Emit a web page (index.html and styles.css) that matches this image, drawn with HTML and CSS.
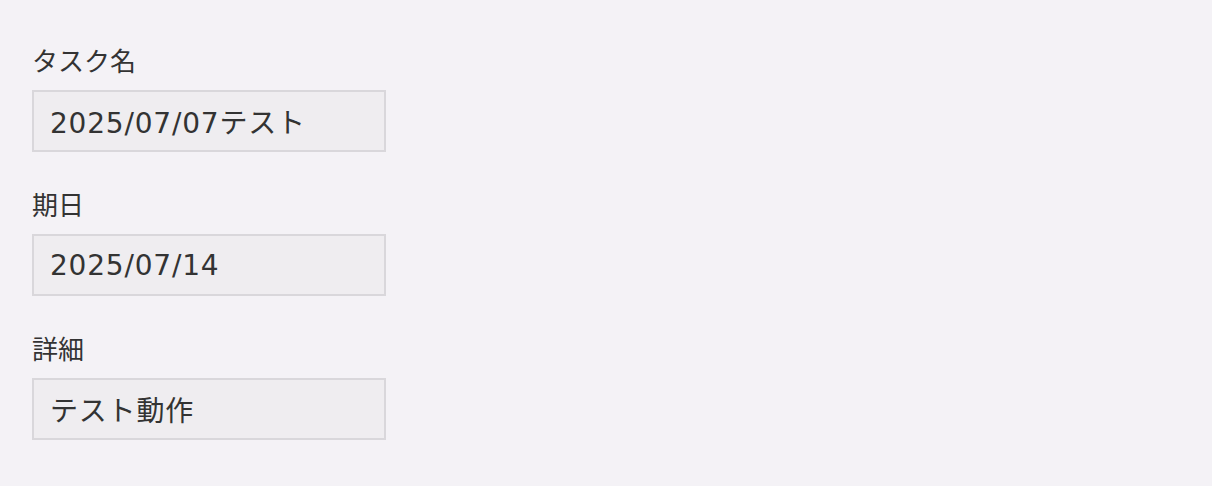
FILE: index.html
```html
<!DOCTYPE html>
<html lang="ja">
<head>
    <meta charset="UTF-8">
    <meta name="viewport" content="width=device-width, initial-scale=1.0">
    <title>タスク詳細</title>
    <link rel="stylesheet" href="styles.css">
</head>
<body>
    <main class="task-detail">
        <div class="form-group">
            <label for="taskName">タスク名</label>
            <input type="text" id="taskName" value="2025/07/07テスト" readonly>
        </div>

        <div class="form-group">
            <label for="dueDate">期日</label>
            <input type="text" id="dueDate" value="2025/07/14" readonly>
        </div>

        <div class="form-group">
            <label for="detail">詳細</label>
            <input type="text" id="detail" value="テスト動作" readonly>
        </div>
    </main>
</body>
</html>
```

FILE: styles.css
```css
body {
    background-color: #f4f2f6;
    margin: 0;
    font-family: "Noto Sans CJK JP", "Noto Sans", sans-serif;
    color: #333;
}

.task-detail {
    display: flex;
    flex-direction: column;
    gap: 33px;
    padding: 41px 32px;
}

.form-group {
    display: flex;
    flex-direction: column;
    align-items: flex-start;
}

.form-group label {
    display: block;
    font-size: 26px;
    line-height: 38px;
    margin-bottom: 11px;
    color: #333;
}

.form-group input {
    width: 354px;
    height: 62px;
    box-sizing: border-box;
    padding: 0 16px;
    border: 2px solid #d9d7db;
    border-radius: 0;
    background-color: #efedf0;
    color: #333;
    font-family: "DejaVu Sans", "Noto Sans CJK JP", sans-serif;
    font-size: 28px;
    letter-spacing: 0.8px;
    outline: none;
}
```
